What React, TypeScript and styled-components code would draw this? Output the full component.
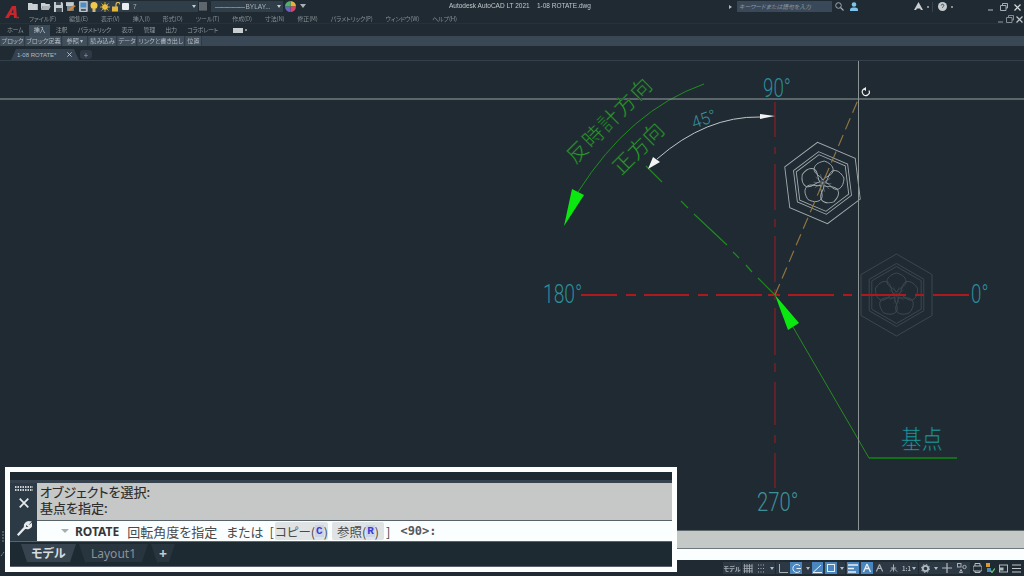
import React from 'react'
import styled, { createGlobalStyle } from 'styled-components'

const UI_FONT = '"Noto Sans CJK JP", "Noto Sans", sans-serif'

const Global = createGlobalStyle`
  html, body {
    margin: 0;
    padding: 0;
    background: #1f2a32;
    overflow: hidden;
  }
  * { box-sizing: border-box; }
`

const Page = styled.div`
  position: relative;
  width: 1024px;
  height: 576px;
  display: flex;
  flex-direction: column;
  background: #1f2a32;
  font-family: ${UI_FONT};
  font-feature-settings: "palt";
  overflow: hidden;
`

const Chrome = styled.div`
  display: flex;
  flex-direction: column;
  filter: blur(0.35px);
`

const TitleBar = styled.div`
  position: relative;
  height: 14px;
  display: flex;
  align-items: flex-start;
  padding-top: 1px;
`

const Logo = styled.div`
  width: 28px;
  padding-left: 5px;
`

const QuickIcons = styled.div`
  display: flex;
  align-items: center;
  gap: 3px;
  width: 60px;
  height: 11px;
`

const Combo = styled.div<{ $w: number }>`
  width: ${p => p.$w}px;
  height: 11px;
  display: flex;
  align-items: center;
  background: #303e4a;
  color: #a9b0b5;
  font-size: 6.5px;
  font-family: "Liberation Sans", sans-serif;
  position: relative;
`

const ComboArrow = styled.span`
  position: absolute;
  right: 2px;
  top: 4px;
  border-left: 2.5px solid transparent;
  border-right: 2.5px solid transparent;
  border-top: 3px solid #c6ccd0;
`

const TitleText = styled.div`
  position: absolute;
  left: 449px;
  top: 2px;
  font-family: "Liberation Sans", sans-serif;
  font-size: 6.5px;
  line-height: 8px;
  color: #c3c9cd;
  white-space: pre;
`

const TitleRight = styled.div`
  position: absolute;
  left: 729px;
  top: 1px;
  width: 295px;
  height: 11px;
  display: flex;
  align-items: center;
`

const SearchBox = styled.div`
  width: 95px;
  height: 11px;
  margin: 0 3px 0 5px;
  padding-left: 2px;
  background: #3a4959;
  color: #909aa3;
  font-size: 5.8px;
  line-height: 11px;
  font-style: italic;
  white-space: nowrap;
`

const Divider = styled.span`
  width: 1px;
  height: 10px;
  background: #36434e;
`

const TinyDot = styled.span<{ $ml: number }>`
  width: 2px;
  height: 2px;
  margin-left: ${p => p.$ml}px;
  border-radius: 50%;
  background: #aab1b6;
`

const MenuBar = styled.div`
  position: relative;
  height: 10px;
  display: flex;
  align-items: center;
  gap: 13px;
  padding-left: 29px;
  color: #878f95;
  font-size: 6px;
  letter-spacing: -0.15px;
  white-space: nowrap;
  border-bottom: 1px solid #26323b;
`

const WindowControls = styled.div<{ $right: number; $top: number; $gap: number }>`
  position: absolute;
  right: ${p => p.$right}px;
  top: ${p => p.$top}px;
  display: flex;
  align-items: center;
  gap: ${p => p.$gap}px;
`

const RibbonTabs = styled.div`
  height: 11px;
  margin-top: 1px;
  display: flex;
  align-items: stretch;
  gap: 10.5px;
  padding-left: 7px;
  color: #8f979c;
  font-size: 6px;
  letter-spacing: -0.3px;
  line-height: 10px;
  white-space: nowrap;
`

const RibbonTab = styled.div<{ $active?: boolean }>`
  margin: 0 ${p => (p.$active ? '-5px' : '0')};
  padding: 0 ${p => (p.$active ? '5px' : '0')};
  background: ${p => (p.$active ? '#3b4a58' : 'transparent')};
  color: ${p => (p.$active ? '#c2c8cc' : 'inherit')};
`

const RibbonSmallButton = styled.div`
  width: 10px;
  height: 5px;
  margin: 3px 0 0 5px;
  background: #c8cdd0;
`

const RibbonMore = styled.span`
  width: 2px;
  height: 2px;
  margin: 4px 0 0 -9px;
  border-radius: 50%;
  background: #aab1b6;
`

const RibbonPanels = styled.div`
  height: 10px;
  display: flex;
  align-items: stretch;
  gap: 1px;
  padding-left: 1px;
  background: #3a4856;
  color: #b4bbc0;
  font-size: 6.2px;
  line-height: 9px;
  white-space: nowrap;
`

const PanelLabel = styled.div<{ $w: number }>`
  width: ${p => p.$w}px;
  text-align: center;
  background: #414f5d;
  border-right: 1px solid #2f3b47;
`

const DocTabs = styled.div`
  height: 15px;
  display: flex;
  align-items: flex-end;
  padding-left: 11px;
  border-bottom: 1px solid #34414c;
`

const DocTab = styled.div`
  width: 68px;
  height: 11px;
  padding-left: 6px;
  display: flex;
  align-items: center;
  justify-content: space-between;
  padding-right: 7px;
  background: #35424f;
  clip-path: polygon(5px 0, 63px 0, 68px 100%, 0 100%);
  color: #b3babf;
  font-family: "Liberation Sans", sans-serif;
  font-size: 6px;
`

const DocPlus = styled.div`
  width: 12px;
  height: 9px;
  margin-left: 1px;
  margin-bottom: 1px;
  background: #2d3944;
  border-radius: 3px;
  color: #9aa2a8;
  text-align: center;
  font-size: 8px;
  line-height: 9px;
`

const Canvas = styled.div`
  flex: 1;
  min-height: 0;
`

const Drawing = styled.svg`
  display: block;
  width: 100%;
  height: 100%;
`

const CadLabel = styled.text<{ $size: number; $color: string }>`
  font-family: "Roboto", sans-serif;
  font-weight: 300;
  font-size: ${p => p.$size}px;
  fill: ${p => p.$color};
`

// only a regular CJK weight is installed: the canvas-coloured stroke thins it down to CAD line weight
const CadKanji = styled.text<{ $size: number; $color: string; $thin: number }>`
  font-family: "Noto Sans CJK JP", sans-serif;
  font-size: ${p => p.$size}px;
  fill: ${p => p.$color};
  stroke: #1f2a32;
  stroke-width: ${p => p.$thin}px;
  paint-order: fill stroke;
`

const HistoryStrip = styled.div`
  height: 19px;
  margin-left: 8px;
  background: #c4c8c6;
  border-top: 1px solid #5d676c;
  border-bottom: 1px solid #6e777b;
`

const PromptStrip = styled.div`
  height: 11px;
  margin-left: 8px;
  background: #fbfefe;
`

const StatusBar = styled.div`
  height: 16px;
  display: flex;
  align-items: center;
  padding-left: 723px;
  background: #1f2a32;
  color: #a9b0b5;
  filter: blur(0.3px);
`

const StatusGroup = styled.div<{ $bare?: boolean }>`
  height: 12px;
  display: flex;
  align-items: center;
  margin-right: 1px;
  background: ${p => (p.$bare ? 'transparent' : '#2c3944')};
`

const StatusButton = styled.div<{ $w: number; $on?: boolean }>`
  width: ${p => p.$w}px;
  height: 12px;
  flex: none;
  display: flex;
  align-items: center;
  justify-content: center;
  background: ${p => (p.$on ? '#4a86bd' : 'transparent')};
  font-size: 6px;
  font-weight: 700;
  white-space: nowrap;
  color: ${p => (p.$on ? '#e8eef2' : '#a9b0b5')};
`

const StatusGap = styled.span<{ $w: number }>`
  width: ${p => p.$w}px;
  flex: none;
`

const StatusArrow = styled.span`
  width: 0;
  margin-left: 1px;
  border-left: 2px solid transparent;
  border-right: 2px solid transparent;
  border-top: 3px solid #b3babf;
`

// what shows of the UCS icon beside the call-out
const UcsMark = styled.svg`
  position: absolute;
  left: 0;
  top: 530px;
`

/* the white call-out frame laid over the real command line */
const CommandFrame = styled.div`
  position: absolute;
  left: 5px;
  top: 467px;
  width: 672px;
  height: 105px;
  border: 5px solid #fdfefe;
  background: #1e2a32;
  display: flex;
  flex-direction: column;
`

const CommandTop = styled.div`
  height: 11px;
  flex: none;
  background: #1d2931;
  border-bottom: 3px solid #36424d;
`

const CommandBody = styled.div`
  height: 58px;
  flex: none;
  display: flex;
`

const CommandIcons = styled.div`
  width: 27px;
  flex: none;
  display: flex;
  flex-direction: column;
  align-items: center;
  background: #2c3a45;
  padding-top: 3px;
`

const IconGap = styled.span<{ $h: number }>`
  height: ${p => p.$h}px;
  flex: none;
`

const CommandMain = styled.div`
  flex: 1;
  display: flex;
  flex-direction: column;
`

const History = styled.div`
  height: 38px;
  padding: 1px 0 0 3px;
  background: #c5c8c6;
  border-bottom: 1px solid #59636a;
  color: #2b2b2b;
  font-size: 13px;
  line-height: 16px;
  -webkit-text-stroke: 0.15px #2b2b2b;
`

const Prompt = styled.div`
  height: 20px;
  display: flex;
  align-items: center;
  padding-left: 24px;
  background: #fbfefe;
  color: #4a4a4a;
  font-size: 13px;
  white-space: nowrap;
`

const PromptCaret = styled.span`
  margin-right: 6px;
  border-left: 4px solid transparent;
  border-right: 4px solid transparent;
  border-top: 4px solid #a9adb0;
`

const CommandName = styled.b`
  margin-right: 8px;
  color: #33373a;
  font-family: "Noto Sans", sans-serif;
  font-size: 12px;
`

const Phrase = styled.span<{ $mr: number }>`
  margin-right: ${p => p.$mr}px;
`

const OptionChip = styled.span<{ $w: number; $mr: number }>`
  display: inline-flex;
  align-items: center;
  justify-content: center;
  width: ${p => p.$w}px;
  height: 18px;
  margin-right: ${p => p.$mr}px;
  background: #dfe3e3;
  border-radius: 2px;
  font-size: 12.5px;
`

const OptionKey = styled.span`
  padding: 0 1px;
  background: #ccd4ea;
  color: #3a3ccf;
  font-family: "Liberation Mono", monospace;
  font-weight: 700;
  font-size: 11px;
`

const MonoText = styled.span<{ $ml: number }>`
  margin-left: ${p => p.$ml}px;
  color: #55595c;
  font-family: "DejaVu Sans Mono", monospace;
  font-weight: 700;
  font-size: 12px;
`

const LayoutTabs = styled.div`
  flex: 1;
  display: flex;
  align-items: flex-start;
  gap: 3px;
  padding: 2px 0 0 11px;
  border-top: 1px solid #5a656b;
  border-bottom: 1px solid #56616a;
`

const LayoutTab = styled.div<{ $active?: boolean; $w: number }>`
  width: ${p => p.$w}px;
  height: 18px;
  display: flex;
  align-items: center;
  justify-content: center;
  background: ${p => (p.$active ? '#37444f' : '#28343e')};
  clip-path: polygon(0 0, 100% 0, calc(100% - 6px) 100%, 6px 100%);
  color: ${p => (p.$active ? '#d6dbde' : '#8b9399')};
  font-family: "Noto Sans", "Noto Sans CJK JP", sans-serif;
  font-size: 12px;
  font-weight: ${p => (p.$active ? 700 : 400)};
`

const LayoutPlus = styled(LayoutTab)`
  color: #c4cacd;
  font-size: 14px;
  font-weight: 700;
`

const FolderIcon = ({ open }: { open?: boolean }) => (
  <svg width="10" height="9" viewBox="0 0 10 9">
    <path d={open ? 'M0 1h4l1 1h4v2H2L0 8z' : 'M0 1h4l1 1h5v6H0z'} fill="#c9cfd3" />
    {open && <path d="M2 4h8L8 8H0z" fill="#aab2b7" />}
  </svg>
)

const SaveIcon = () => (
  <svg width="10" height="10" viewBox="0 0 10 10">
    <path d="M0 0h8l2 2v8H0z" fill="#c5cbcf" />
    <path d="M2 0h5v3H2zM2 6h6v4H2z" fill="#3d4a55" />
  </svg>
)

const SaveAsIcon = () => (
  <svg width="10" height="10" viewBox="0 0 10 10">
    <path d="M0 0h8v4H0z" fill="#c5cbcf" />
    <path d="M1 4h7v5H1z" fill="#7e888f" />
    <path d="M2 8l6-5 2 1-6 5z" fill="#d08a3c" />
  </svg>
)

const PlotIcon = () => (
  <svg width="9" height="11" viewBox="0 0 9 11">
    <rect width="9" height="11" rx="1" fill="#b8c2c8" />
    <rect x="1.5" y="1.5" width="6" height="5" fill="#4b8fc4" />
    <rect x="2" y="8" width="5" height="2" fill="#4a5761" />
  </svg>
)

const Bulb = () => (
  <svg width="8" height="10" viewBox="0 0 8 10">
    <circle cx="4" cy="3.6" r="3.5" fill="#f3c74a" />
    <rect x="2.5" y="7" width="3" height="3" fill="#c8b98c" />
  </svg>
)

const Sun = () => (
  <svg width="10" height="10" viewBox="0 0 10 10">
    <circle cx="5" cy="5" r="2.8" fill="#f6c842" />
    <path d="M5 0v10M0 5h10M1.5 1.5l7 7M8.5 1.5l-7 7" stroke="#e8b93c" strokeWidth=".8" />
  </svg>
)

const Padlock = () => (
  <svg width="8" height="10" viewBox="0 0 8 10">
    <path d="M4 5V2.5a2 2 0 014 0" fill="none" stroke="#e4c35a" strokeWidth="1.1" />
    <rect y="4.5" width="6" height="5" fill="#e3b63c" />
  </svg>
)

const ColorWheel = () => (
  <svg width="11" height="11" viewBox="0 0 11 11">
    <path d="M5.500 5.500V0a5.500 5.500 0 015.500 5.500z" fill="#e8b23a" />
    <path d="M5.500 5.500h5.500A5.500 5.500 0 015.500 11z" fill="#d9436a" />
    <path d="M5.500 5.500V11A5.500 5.500 0 010 5.500z" fill="#6b62c8" />
    <path d="M5.500 5.500H0A5.500 5.500 0 015.500 0z" fill="#4fb070" />
  </svg>
)

const Minimize = ({ c }: { c: string }) => (
  <svg width="6" height="8" viewBox="0 0 6 8"><path d="M0 7h5" stroke={c} strokeWidth="1" /></svg>
)

const Restore = ({ c }: { c: string }) => (
  <svg width="8" height="8" viewBox="0 0 8 8">
    <path d="M2.500 2V.5h5V5H6M.5 2.500h5.500V7.500H.5z" fill="none" stroke={c} strokeWidth=".9" />
  </svg>
)

const CloseX = ({ c, size = 7 }: { c: string; size?: number }) => (
  <svg width={size} height={size} viewBox="0 0 7 7">
    <path d="M.5.5l6 6M6.500.5l-6 6" stroke={c} strokeWidth="1.200" />
  </svg>
)

const hexPoints = (r: number) =>
  Array.from({ length: 6 }, (_, i) => {
    const a = (Math.PI / 3) * i - Math.PI / 2
    return `${(r * Math.cos(a)).toFixed(1)},${(r * Math.sin(a)).toFixed(1)}`
  }).join(' ')

const PETAL = 'M0 -3C-2 -7 -10 -8 -9.500 -14C-9 -18.500 -4 -21 0 -22C4 -21 9 -18.500 9.500 -14C10 -8 2 -7 0 -3Z'

// 家紋: hexagons + plum blossom, drawn around its own centre
const Emblem = ({ x, y, angle, color }: { x: number; y: number; angle: number; color: string }) => (
  <g transform={`translate(${x} ${y}) rotate(${angle})`} fill="none" stroke={color} strokeWidth=".9">
    <polygon points={hexPoints(41)} />
    <polygon points={hexPoints(31.5)} />
    <polygon points={hexPoints(28.5)} />
    {[0, 72, 144, 216, 288].map(a => (
      <path key={a} d={PETAL} transform={`rotate(${a})`} />
    ))}
    {Array.from({ length: 10 }, (_, i) => (
      <path key={i} d="M0 0V-9" transform={`rotate(${i * 36 + 18})`} strokeWidth=".4" />
    ))}
  </g>
)

const RED_H = 'M581 295H617M626 295H636M644 295H689M698 295H708M716 295H762M768 295H780M788 295H834M843 295H852M861 295H906M915 295H924M933 295H969'
const RED_V = 'M775 102V137M775 147V154M775 164V210M775 219V227M775 236V282M775 289V300M775 308V355M775 363V372M775 382V425M775 435V443M775 453V488'
const GREEN_DASH = 'M646 166L662 182M681 201L688 208M694 214L727 245M733 252L739 258M746 265L752 272M758 278L775 295'

const menuItems = ['ファイル(F)', '編集(E)', '表示(V)', '挿入(I)', '形式(O)', 'ツール(T)', '作成(D)', '寸法(N)', '修正(M)', 'パラメトリック(P)', 'ウィンドウ(W)', 'ヘルプ(H)']
const ribbonItems = ['ホーム', '挿入', '注釈', 'パラメトリック', '表示', '管理', '出力', 'コラボレート']
const panels: [string, number][] = [['ブロック', 24], ['ブロック定義', 36], ['参照 ▾', 25], ['読み込み', 28], ['データ', 19], ['リンクと書き出し', 47], ['位置', 16]]

export default function App() {
  return (
    <Page>
      <Global />
      <Chrome>
        <TitleBar>
          <Logo>
            <svg width="15" height="14" viewBox="0 0 15 14">
              <path d="M0 12L7 0h4l1 12H9L8.700 9H5.500L3.500 12zM6.500 7H8.500L8 3z" fill="#c8262c" />
              <path d="M11 11.500h3" stroke="#a8282c" strokeWidth="1.500" />
            </svg>
          </Logo>
          <QuickIcons>
            <FolderIcon />
            <FolderIcon open />
            <SaveIcon />
            <SaveAsIcon />
            <PlotIcon />
          </QuickIcons>
          <Combo $w={110}>
            <StatusGap $w={2} />
            <Bulb />
            <StatusGap $w={2} />
            <Sun />
            <StatusGap $w={2} />
            <Padlock />
            <svg width="7" height="7" viewBox="0 0 7 7" style={{ margin: '0 4px 0 2px' }}><rect width="7" height="7" rx="1" fill="#e9ecee" /></svg>
            7
            <ComboArrow />
          </Combo>
          <svg width="8" height="9" viewBox="0 0 8 9" style={{ margin: '1px 4px 0 1px', flex: 'none' }}>
            <path d="M1 0v9M3 0v9M5 0v9M7 0v9M0 1h8M0 3h8M0 5h8M0 7h8" stroke="#8f979c" strokeWidth=".7" />
          </svg>
          <Combo $w={72}>
            <span style={{ color: '#b4bbc0', letterSpacing: -0.6, marginLeft: 4 }}>—————</span>
            <span style={{ marginLeft: 1 }}>BYLAY...</span>
            <ComboArrow />
          </Combo>
          <StatusGap $w={2} />
          <ColorWheel />
          <svg width="6" height="6" viewBox="0 0 6 6" style={{ margin: '2px 0 0 4px' }}><path d="M0 1h6L3 5z" fill="#aab1b6" /></svg>
          <TitleText>{'Autodesk AutoCAD LT 2021    1-08 ROTATE.dwg'}</TitleText>
          <TitleRight>
            <svg width="3" height="4" viewBox="0 0 3 4"><path d="M0 0l3 2-3 2z" fill="#b3babf" /></svg>
            <SearchBox>キーワードまたは語句を入力</SearchBox>
            <svg width="9" height="9" viewBox="0 0 9 9"><circle cx="3.500" cy="3.500" r="2.800" fill="none" stroke="#a2a9ae" /><path d="M5.500 5.500L8.500 8.500" stroke="#a2a9ae" strokeWidth="1.300" /></svg>
            <svg width="10" height="9" viewBox="0 0 10 9" style={{ marginLeft: 5 }}><circle cx="5" cy="2.500" r="2.300" fill="#7cc4ea" /><path d="M1 9V7.500C1 6 3 5.500 5 5.500S9 6 9 7.500V9z" fill="#7cc4ea" /></svg>
            <svg width="9" height="9" viewBox="0 0 9 9" style={{ marginLeft: 55 }}><path d="M4.500 0L9 8H7L6 6.500H3L2 8H0z" fill="#c9cfd3" /></svg>
            <TinyDot $ml={4} />
            <StatusGap $w={3} />
            <Divider />
            <svg width="9" height="9" viewBox="0 0 9 9" style={{ marginLeft: 5 }}><circle cx="4.500" cy="4.500" r="4.500" fill="#c5cbcf" /><path d="M3.200 3.500a1.300 1.300 0 112 1.100c-.5.300-.7.500-.7 1" fill="none" stroke="#2a3640" strokeWidth=".9" /></svg>
            <TinyDot $ml={4} />
          </TitleRight>
          <WindowControls $right={3} $top={3} $gap={6}>
            <Minimize c="#b3babf" />
            <Restore c="#b3babf" />
            <CloseX c="#d5dadd" />
          </WindowControls>
        </TitleBar>
        <MenuBar>
          {menuItems.map(m => <span key={m}>{m}</span>)}
          <WindowControls $right={1} $top={1} $gap={2}>
            <Minimize c="#8f979c" />
            <Restore c="#8f979c" />
            <CloseX c="#c2c8cc" />
          </WindowControls>
        </MenuBar>
        <RibbonTabs>
          {ribbonItems.map(r => <RibbonTab key={r} $active={r === '挿入'}>{r}</RibbonTab>)}
          <RibbonSmallButton />
          <RibbonMore />
        </RibbonTabs>
        <RibbonPanels>
          {panels.map(([label, w]) => <PanelLabel key={label} $w={w}>{label}</PanelLabel>)}
        </RibbonPanels>
        <DocTabs>
          <DocTab>
            1-08 ROTATE*
            <CloseX c="#c2c8cc" size={5} />
          </DocTab>
          <DocPlus>+</DocPlus>
        </DocTabs>
      </Chrome>

      <Canvas>
        <Drawing viewBox="0 61 1024 469">
          <Emblem x={896.500} y={295} angle={0} color="#3e4951" />
          <Emblem x={822.500} y={183} angle={-67} color="#a3abae" />

          <path d={RED_V} stroke="#6a2029" strokeWidth="1.800" fill="none" />
          <path d={RED_H} stroke="#ad1a1e" strokeWidth="1.800" fill="none" />
          <path d="M775 295L858 100" stroke="#8f7440" strokeWidth="1.200" strokeDasharray="12 6" fill="none" />
          <path d={GREEN_DASH} stroke="#1f8a1f" strokeWidth="1.200" fill="none" />

          <path d="M704 84Q630 110 578 192" stroke="#1f8f1f" strokeWidth="1" fill="none" />
          <polygon points="564,226 572,189 584,195" fill="#0be80f" />
          <path d="M793 327L869 458" stroke="#2a8a22" strokeWidth="1" fill="none" />
          <path d="M869 458H957" stroke="#0c8a10" strokeWidth="1.500" fill="none" />
          <polygon points="775,295 799,323 788,330" fill="#0be80f" />

          <path d="M760 117Q706 116 657 159" stroke="#c0c6c8" strokeWidth="1" fill="none" />
          <polygon points="775,116 760,114 760,119" fill="#f2f4f4" />
          <polygon points="648,169 653,157 660,162" fill="#f2f4f4" />

          <path d="M0 99H1024" stroke="#9aa1a2" strokeWidth="1" />
          <path d="M858.500 61V530" stroke="#8d9495" strokeWidth="1" />
          <path d="M869 90.500A3.500 3.500 0 1 1 864 89" fill="none" stroke="#eef0f0" strokeWidth="1.200" />
          <path d="M866 87l-3 2 3 2z" fill="#eef0f0" />

          <CadLabel $size={26} $color="#2c8d99" transform="translate(763 97) scale(.72 1)">90°</CadLabel>
          <CadLabel $size={26} $color="#2c8d99" transform="translate(543 303) scale(.74 1)">180°</CadLabel>
          <CadLabel $size={26} $color="#2c8d99" transform="translate(971 303) scale(.72 1)">0°</CadLabel>
          <CadLabel $size={26} $color="#3f8f99" transform="translate(757 511) scale(.78 1)">270°</CadLabel>
          <CadLabel $size={17} $color="#3a8e98" transform="translate(694 129) rotate(-20)">45°</CadLabel>
          <CadKanji $size={26} $thin={0.7} $color="#1aa3a6" transform="translate(901 449) scale(.8 1)">基点</CadKanji>
          <CadKanji $size={21} $thin={0.45} $color="#2a9a2a" transform="translate(575.300 165) rotate(-45)" letterSpacing="1.400">反時計方向</CadKanji>
          <CadKanji $size={21} $thin={0.45} $color="#2a9a2a" transform="translate(621.300 176) rotate(-45)">正方向</CadKanji>
        </Drawing>
      </Canvas>

      <HistoryStrip />
      <PromptStrip />
      <StatusBar>
        <StatusGroup><StatusButton $w={18}>モデル</StatusButton></StatusGroup>
        <StatusGroup>
          <StatusButton $w={12}>
            <svg width="10" height="9" viewBox="0 0 9 9"><path d="M1 0v9M3.500 0v9M6 0v9M8.500 0v9M0 2h9M0 4.500h9M0 7h9" stroke="#a9b0b5" strokeWidth=".8" /></svg>
          </StatusButton>
          <StatusButton $w={14}>
            <svg width="9" height="9" viewBox="0 0 9 9"><path d="M1 1h7M1 4.500h7M1 8h7" stroke="#a9b0b5" strokeWidth="1" strokeDasharray="1 1.500" /></svg>
          </StatusButton>
          <StatusButton $w={7}><StatusArrow /></StatusButton>
        </StatusGroup>
        <StatusGroup>
          <StatusButton $w={14}>
            <svg width="9" height="9" viewBox="0 0 9 9"><path d="M.5 0v8.500H9" fill="none" stroke="#a9b0b5" /></svg>
          </StatusButton>
          <StatusButton $w={12} $on>
            <svg width="9" height="9" viewBox="0 0 9 9"><path d="M8 2A4 4 0 1 0 8 7M4.500 4.500H9" fill="none" stroke="#e8eef2" /></svg>
          </StatusButton>
          <StatusButton $w={10}><StatusArrow /></StatusButton>
          <StatusButton $w={11} $on>
            <svg width="9" height="9" viewBox="0 0 9 9"><path d="M0 8.500h9M0 8.500L8 1" fill="none" stroke="#e8eef2" /></svg>
          </StatusButton>
          <StatusGap $w={2} />
          <StatusButton $w={12} $on>
            <svg width="10" height="10" viewBox="0 0 10 10"><rect x="1.500" y="1.500" width="7" height="7" fill="none" stroke="#e8eef2" /></svg>
          </StatusButton>
          <StatusButton $w={8}><StatusArrow /></StatusButton>
        </StatusGroup>
        <StatusGroup>
          <StatusGap $w={1} />
          <StatusButton $w={12} $on>
            <svg width="10" height="9" viewBox="0 0 10 9"><path d="M0 1h10M0 4.500h6M0 8h8" stroke="#e8eef2" strokeWidth="1.400" /></svg>
          </StatusButton>
          <StatusGap $w={2} />
          <StatusButton $w={12} $on>
            <svg width="10" height="10" viewBox="0 0 10 10"><path d="M5 1L1.500 9M5 1L8.500 9M3 5.500h4" stroke="#e8eef2" strokeWidth="1.300" /></svg>
          </StatusButton>
          <StatusButton $w={13}>
            <svg width="9" height="10" viewBox="0 0 10 10"><path d="M5 1L1.500 9M5 1L8.500 9M3 5.500h4" stroke="#a9b0b5" strokeWidth="1.300" /></svg>
          </StatusButton>
          <StatusButton $w={14}>
            <svg width="9" height="10" viewBox="0 0 10 10"><path d="M5 1V9M5 5L1 9M5 5L9 9M2 5h6" stroke="#a9b0b5" strokeWidth="1.100" /></svg>
          </StatusButton>
          <StatusButton $w={18}>1:1<StatusArrow /></StatusButton>
        </StatusGroup>
        <StatusGroup>
          <StatusButton $w={12}>
            <svg width="9" height="9" viewBox="0 0 9 9"><circle cx="4.500" cy="4.500" r="2.700" fill="none" stroke="#b3babf" strokeWidth="1.800" /><circle cx="4.500" cy="4.500" r="4.100" fill="none" stroke="#b3babf" strokeDasharray="1.500 1.700" /></svg>
          </StatusButton>
          <StatusButton $w={9}><StatusArrow /></StatusButton>
          <StatusButton $w={14}>
            <svg width="10" height="10" viewBox="0 0 10 10"><path d="M5 0v10M0 5h10" stroke="#b3babf" strokeWidth="1.200" /></svg>
          </StatusButton>
          <StatusButton $w={16}>
            <svg width="10" height="10" viewBox="0 0 10 10"><rect x=".5" y=".5" width="3.500" height="3.500" fill="none" stroke="#a9b0b5" /><circle cx="7.500" cy="4" r="1.700" fill="none" stroke="#a9b0b5" /><path d="M2.500 9.500L4 6.500 5.500 9.500z" fill="none" stroke="#a9b0b5" /></svg>
          </StatusButton>
        </StatusGroup>
        <StatusGroup $bare>
          <StatusButton $w={13}>
            <svg width="9" height="10" viewBox="0 0 9 10"><rect x="0" y="3" width="9" height="5" rx="1" fill="none" stroke="#b3babf" /><path d="M2 3V.5h5V3M2 8v1.500h5V8" fill="none" stroke="#b3babf" /></svg>
          </StatusButton>
          <StatusButton $w={13}>
            <svg width="9" height="10" viewBox="0 0 9 10"><rect width="4" height="4" fill="#d99a34" /><rect x="1" y="5" width="4" height="4" fill="#4a86bd" /><path d="M4.500 7.500L6 9.500 9 5.500" fill="none" stroke="#5fc06a" strokeWidth="1.300" /></svg>
          </StatusButton>
          <StatusButton $w={13}>
            <svg width="9" height="9" viewBox="0 0 9 9"><rect x=".5" y="1" width="8" height="7" fill="none" stroke="#b3babf" /><rect x="1" y="3.500" width="3.500" height="3" fill="#b3babf" /></svg>
          </StatusButton>
          <StatusButton $w={13}>
            <svg width="9" height="9" viewBox="0 0 9 9"><path d="M0 1h9M0 4.500h9M0 8h9" stroke="#c2c8cc" strokeWidth="1.200" /></svg>
          </StatusButton>
        </StatusGroup>
      </StatusBar>

      <UcsMark width="5" height="30" viewBox="0 0 5 30">
        <path d="M3 1V12M1 26L4 22" stroke="#7f888d" strokeWidth="1" strokeDasharray="2 1" fill="none" />
      </UcsMark>

      <CommandFrame>
        <CommandTop />
        <CommandBody>
          <CommandIcons>
            <svg width="18" height="6" viewBox="0 0 18 6"><path d="M0 1h18M0 4h18" stroke="#c9ced1" strokeWidth="1.800" strokeDasharray="1.500 1" /></svg>
            <IconGap $h={6} />
            <CloseX c="#e6eaec" size={10} />
            <IconGap $h={12} />
            <svg width="16" height="17" viewBox="0 0 14 15"><path d="M1.500 13.500L8 6.500M8 6.500a3.500 3.500 0 014-4.500l-2 2 1.500 1.500 2-1.500a3.500 3.500 0 01-5.500 2.500" fill="none" stroke="#e6eaec" strokeWidth="2" /></svg>
          </CommandIcons>
          <CommandMain>
            <History>
              <div>オブジェクトを選択:</div>
              <div>基点を指定:</div>
            </History>
            <Prompt>
              <PromptCaret />
              <CommandName>ROTATE</CommandName>
              <Phrase $mr={9}>回転角度を指定</Phrase>
              <Phrase $mr={6}>または</Phrase>
              <Phrase $mr={1}>[</Phrase>
              <OptionChip $w={53} $mr={4}>コピー(<OptionKey>C</OptionKey>)</OptionChip>
              <OptionChip $w={52} $mr={2}>参照(<OptionKey>R</OptionKey>)</OptionChip>
              <span>]</span>
              <MonoText $ml={10}>&lt;90&gt;:</MonoText>
            </Prompt>
          </CommandMain>
        </CommandBody>
        <LayoutTabs>
          <LayoutTab $active $w={55}>モデル</LayoutTab>
          <LayoutTab $w={69}>Layout1</LayoutTab>
          <LayoutPlus $w={24}>+</LayoutPlus>
        </LayoutTabs>
      </CommandFrame>
    </Page>
  )
}
